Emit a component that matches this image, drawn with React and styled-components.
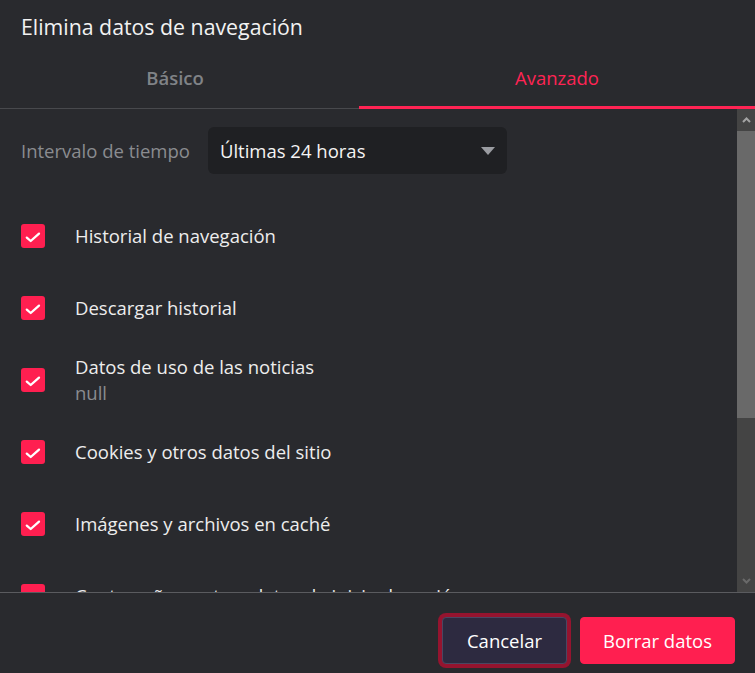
import React from 'react';
import styled, { createGlobalStyle } from 'styled-components';

const GlobalStyle = createGlobalStyle`
  html, body {
    margin: 0;
    padding: 0;
    background: #292a2e;
  }
  * {
    box-sizing: border-box;
  }
`;

const Dialog = styled.div`
  width: 755px;
  height: 673px;
  display: flex;
  flex-direction: column;
  background: #292a2e;
  font-family: 'Open Sans', 'Noto Sans', sans-serif;
  color: #ececec;
  overflow: hidden;
`;

const Title = styled.h1`
  margin: 0;
  padding: 13px 21px 0;
  height: 41px;
  font-size: 21.3px;
  line-height: 28px;
  font-weight: 400;
  color: #f2f2f2;
`;

const Tabs = styled.div`
  display: grid;
  grid-template-columns: 350px 1fr;
  column-gap: 9px;
  height: 68px;
  border-bottom: 1px solid #48494d;
`;

const Tab = styled.div`
  display: flex;
  align-items: flex-end;
  justify-content: center;
  padding-bottom: 16px;
  font-size: 18.5px;
  line-height: 24px;
  font-weight: ${(props) => (props.active ? 400 : 600)};
  color: ${(props) => (props.active ? '#ff2454' : '#808387')};
  border-bottom: 3px solid ${(props) => (props.active ? '#ff2454' : 'transparent')};
  border-radius: 2px 2px 0 0;
  margin-bottom: -1px;
`;

const Body = styled.div`
  flex: 1;
  display: flex;
  min-height: 0;
`;

const Content = styled.div`
  flex: 1;
  overflow: hidden;
  padding: 18px 0 0 21px;
`;

const TimeRow = styled.div`
  display: flex;
  align-items: center;
  gap: 18px;
  margin-bottom: 26px;
`;

const TimeLabel = styled.span`
  font-size: 18.5px;
  color: #8a8c90;
`;

const Select = styled.div`
  width: 299px;
  height: 47px;
  display: flex;
  align-items: center;
  justify-content: space-between;
  padding: 0 12px 0 12px;
  background: #1f2023;
  border-radius: 6px;
  font-size: 18.5px;
  color: #f4f4f4;
`;

const Arrow = styled.span`
  width: 0;
  height: 0;
  border-left: 7px solid transparent;
  border-right: 7px solid transparent;
  border-top: 8px solid #9a9ca1;
`;

const Row = styled.div`
  height: 72px;
  display: flex;
  align-items: center;
  gap: 30px;
`;

const Box = styled.span`
  flex: none;
  width: 24px;
  height: 24px;
  border-radius: 3px;
  background: #ff1f50;
  display: flex;
  align-items: center;
  justify-content: center;
`;

const Texts = styled.div`
  display: flex;
  flex-direction: column;
  white-space: nowrap;
`;

const Label = styled.span`
  font-size: 18.5px;
  line-height: 26px;
  color: #ededed;
`;

const Sub = styled.span`
  font-size: 18.5px;
  line-height: 26px;
  color: #8a8c90;
`;

const Scrollbar = styled.div`
  width: 18px;
  display: flex;
  flex-direction: column;
  background: #444444;
`;

const ScrollButton = styled.div`
  height: 22px;
  display: flex;
  align-items: center;
  justify-content: center;
`;

const Track = styled.div`
  flex: 1;
  display: flex;
  flex-direction: column;
`;

const Thumb = styled.div`
  height: 287px;
  background: #696969;
`;

const Footer = styled.div`
  height: 81px;
  border-top: 1px solid #5a5b5f;
  display: flex;
  justify-content: flex-end;
  align-items: flex-start;
  gap: 13px;
  padding: 24px 20px 0 0;
`;

const Button = styled.button`
  height: 47px;
  padding: 0 ${(props) => (props.primary ? '22px' : '24px')};
  border-radius: 4px;
  font-family: inherit;
  font-size: 18.5px;
  color: #ffffff;
  background: ${(props) => (props.primary ? '#ff1f50' : '#2d2a40')};
  border: 1px solid ${(props) => (props.primary ? '#ff1f50' : '#4a4762')};
  box-shadow: ${(props) => (props.focused ? '0 0 0 4px #95142f' : 'none')};
`;

const Check = () => (
  <svg width="24" height="24" viewBox="0 0 24 24">
    <path d="M5.8 13.6 L9.7 17 L18 9.6" fill="none" stroke="#fff" strokeWidth="2.3" strokeLinecap="round" strokeLinejoin="round" />
  </svg>
);

const Chevron = ({ down }) => (
  <svg width="9" height="6" viewBox="0 0 9 6">
    <path
      d={down ? 'M1 1 L4.5 4.5 L8 1' : 'M1 5 L4.5 1.5 L8 5'}
      fill="none"
      stroke={down ? '#6a6a6a' : '#a3a3a3'}
      strokeWidth="2"
    />
  </svg>
);

const items = [
  { label: 'Historial de navegación' },
  { label: 'Descargar historial' },
  { label: 'Datos de uso de las noticias', sub: 'null' },
  { label: 'Cookies y otros datos del sitio' },
  { label: 'Imágenes y archivos en caché' },
  { label: 'Contraseñas y otros datos de inicio de sesión' },
];

const App = () => (
  <>
    <GlobalStyle />
    <Dialog>
      <Title>Elimina datos de navegación</Title>
      <Tabs>
        <Tab>Básico</Tab>
        <Tab active>Avanzado</Tab>
      </Tabs>
      <Body>
        <Content>
          <TimeRow>
            <TimeLabel>Intervalo de tiempo</TimeLabel>
            <Select>
              Últimas 24 horas
              <Arrow />
            </Select>
          </TimeRow>
          {items.map((item) => (
            <Row key={item.label}>
              <Box>
                <Check />
              </Box>
              <Texts>
                <Label>{item.label}</Label>
                {item.sub && <Sub>{item.sub}</Sub>}
              </Texts>
            </Row>
          ))}
        </Content>
        <Scrollbar>
          <ScrollButton>
            <Chevron />
          </ScrollButton>
          <Track>
            <Thumb />
          </Track>
          <ScrollButton>
            <Chevron down />
          </ScrollButton>
        </Scrollbar>
      </Body>
      <Footer>
        <Button focused>Cancelar</Button>
        <Button primary>Borrar datos</Button>
      </Footer>
    </Dialog>
  </>
);

export default App;
